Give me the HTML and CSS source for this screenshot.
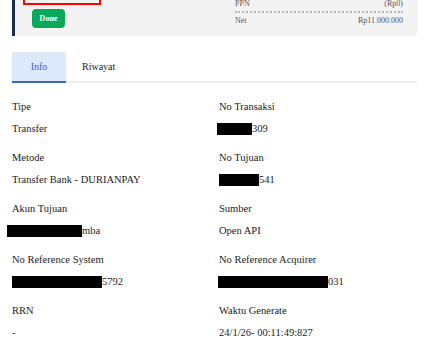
FILE: index.html
```html
<!DOCTYPE html>
<html lang="id">
<head>
  <meta charset="UTF-8" />
  <meta name="viewport" content="width=device-width, initial-scale=1.0"/>
  <title>Detail Transaksi</title>
  <link rel="stylesheet" href="styles.css">
</head>
<body>

  <!-- Summary card (top of page, partly scrolled away) -->
  <section class="summary-card">
    <div class="summary-left">
      <div class="status-box"></div>
      <button class="btn-done">Done</button>
    </div>
    <div class="summary-right">
      <div class="summary-row">
        <span>PPN</span>
        <span>(Rp0)</span>
      </div>
      <div class="summary-row net">
        <span>Net</span>
        <span>Rp11.000.000</span>
      </div>
    </div>
  </section>

  <!-- Tabs -->
  <nav class="tabs">
    <a href="#" class="tab active">Info</a>
    <a href="#" class="tab">Riwayat</a>
  </nav>

  <!-- Info grid -->
  <section class="info">
    <div class="info-item">
      <div class="label">Tipe</div>
      <div class="value">Transfer</div>
    </div>
    <div class="info-item">
      <div class="label">No Transaksi</div>
      <div class="value"><span class="redact r-trx"></span>309</div>
    </div>

    <div class="info-item">
      <div class="label">Metode</div>
      <div class="value">Transfer Bank - DURIANPAY</div>
    </div>
    <div class="info-item">
      <div class="label">No Tujuan</div>
      <div class="value"><span class="redact r-tujuan"></span>541</div>
    </div>

    <div class="info-item">
      <div class="label">Akun Tujuan</div>
      <div class="value"><span class="redact r-akun"></span>mba</div>
    </div>
    <div class="info-item">
      <div class="label">Sumber</div>
      <div class="value">Open API</div>
    </div>

    <div class="info-item">
      <div class="label">No Reference System</div>
      <div class="value"><span class="redact r-system"></span>5792</div>
    </div>
    <div class="info-item">
      <div class="label">No Reference Acquirer</div>
      <div class="value"><span class="redact r-acquirer"></span>031</div>
    </div>

    <div class="info-item">
      <div class="label">RRN</div>
      <div class="value">-</div>
    </div>
    <div class="info-item">
      <div class="label">Waktu Generate</div>
      <div class="value">24/1/26- 00:11:49:827</div>
    </div>
  </section>

</body>
</html>
```

FILE: styles.css
```css
:root {
  --navy: #1d2b4f;
  --card-bg: #f3f3f3;
  --green: #0ba75b;
  --blue: #3a62c4;
  --tab-bg: #dce9fb;
  --text: #222;
  --muted: #555;
}

body {
  margin: 0;
  font-family: 'Liberation Serif', 'Times New Roman', serif;
  color: var(--text);
  background: #fff;
  overflow: hidden;
}

/* Summary card */
.summary-card {
  display: flex;
  justify-content: space-between;
  height: 36px;
  margin: 0 15px 0 12px;
  background: var(--card-bg);
  border-left: 3px solid var(--navy);
  border-radius: 0 0 6px 0;
  box-sizing: border-box;
}

.summary-left {
  display: flex;
  flex-direction: column;
  align-items: flex-start;
  padding-left: 8px;
}

.status-box {
  width: 78px;
  height: 25px;
  margin-top: -20px;
  border: 2px solid #f00;
  box-sizing: border-box;
}

.btn-done {
  margin: 4px 0 0 9px;
  width: 33px;
  height: 19px;
  padding: 0;
  border: none;
  border-radius: 4px;
  background: var(--green);
  color: #fff;
  font-family: 'Liberation Serif', serif;
  font-weight: bold;
  font-size: 8px;
}

.summary-right {
  width: 168px;
  padding-right: 15px;
  font-size: 8px;
  color: var(--muted);
}

.summary-row {
  display: flex;
  justify-content: space-between;
  line-height: 10px;
  margin-top: -1px;
}

.summary-row.net {
  margin-top: 2px;
  padding-top: 3px;
  border-top: 2px dotted #bbb;
}

/* Tabs */
.tabs {
  display: flex;
  margin: 16px 16px 0 12px;
  border-bottom: 2px solid #eee;
}

.tab {
  min-width: 54px;
  box-sizing: border-box;
  padding: 0 16px;
  height: 31px;
  line-height: 29px;
  margin-bottom: -2px;
  border-bottom: 2px solid transparent;
  text-align: center;
  font-size: 10px;
  color: var(--text);
  text-decoration: none;
}

.tab.active {
  background: var(--tab-bg);
  color: var(--blue);
  border-bottom-color: var(--blue);
}

/* Info grid */
.info {
  display: grid;
  grid-template-columns: 1fr 1fr;
  column-gap: 8px;
  padding: 18px 15px 0 12px;
  font-size: 10.5px;
}

.info-item {
  margin-bottom: 17px;
}

.label,
.value {
  line-height: 12px;
  white-space: nowrap;
}

.value {
  margin-top: 10px;
}

.redact {
  display: inline-block;
  height: 12px;
  background: #000;
  vertical-align: top;
}

.r-trx { width: 35px; margin-left: -2px; }
.r-tujuan { width: 40px; }
.r-akun { width: 75px; margin-left: -5px; }
.r-system { width: 90px; }
.r-acquirer { width: 110px; margin-left: -1px; }
```
